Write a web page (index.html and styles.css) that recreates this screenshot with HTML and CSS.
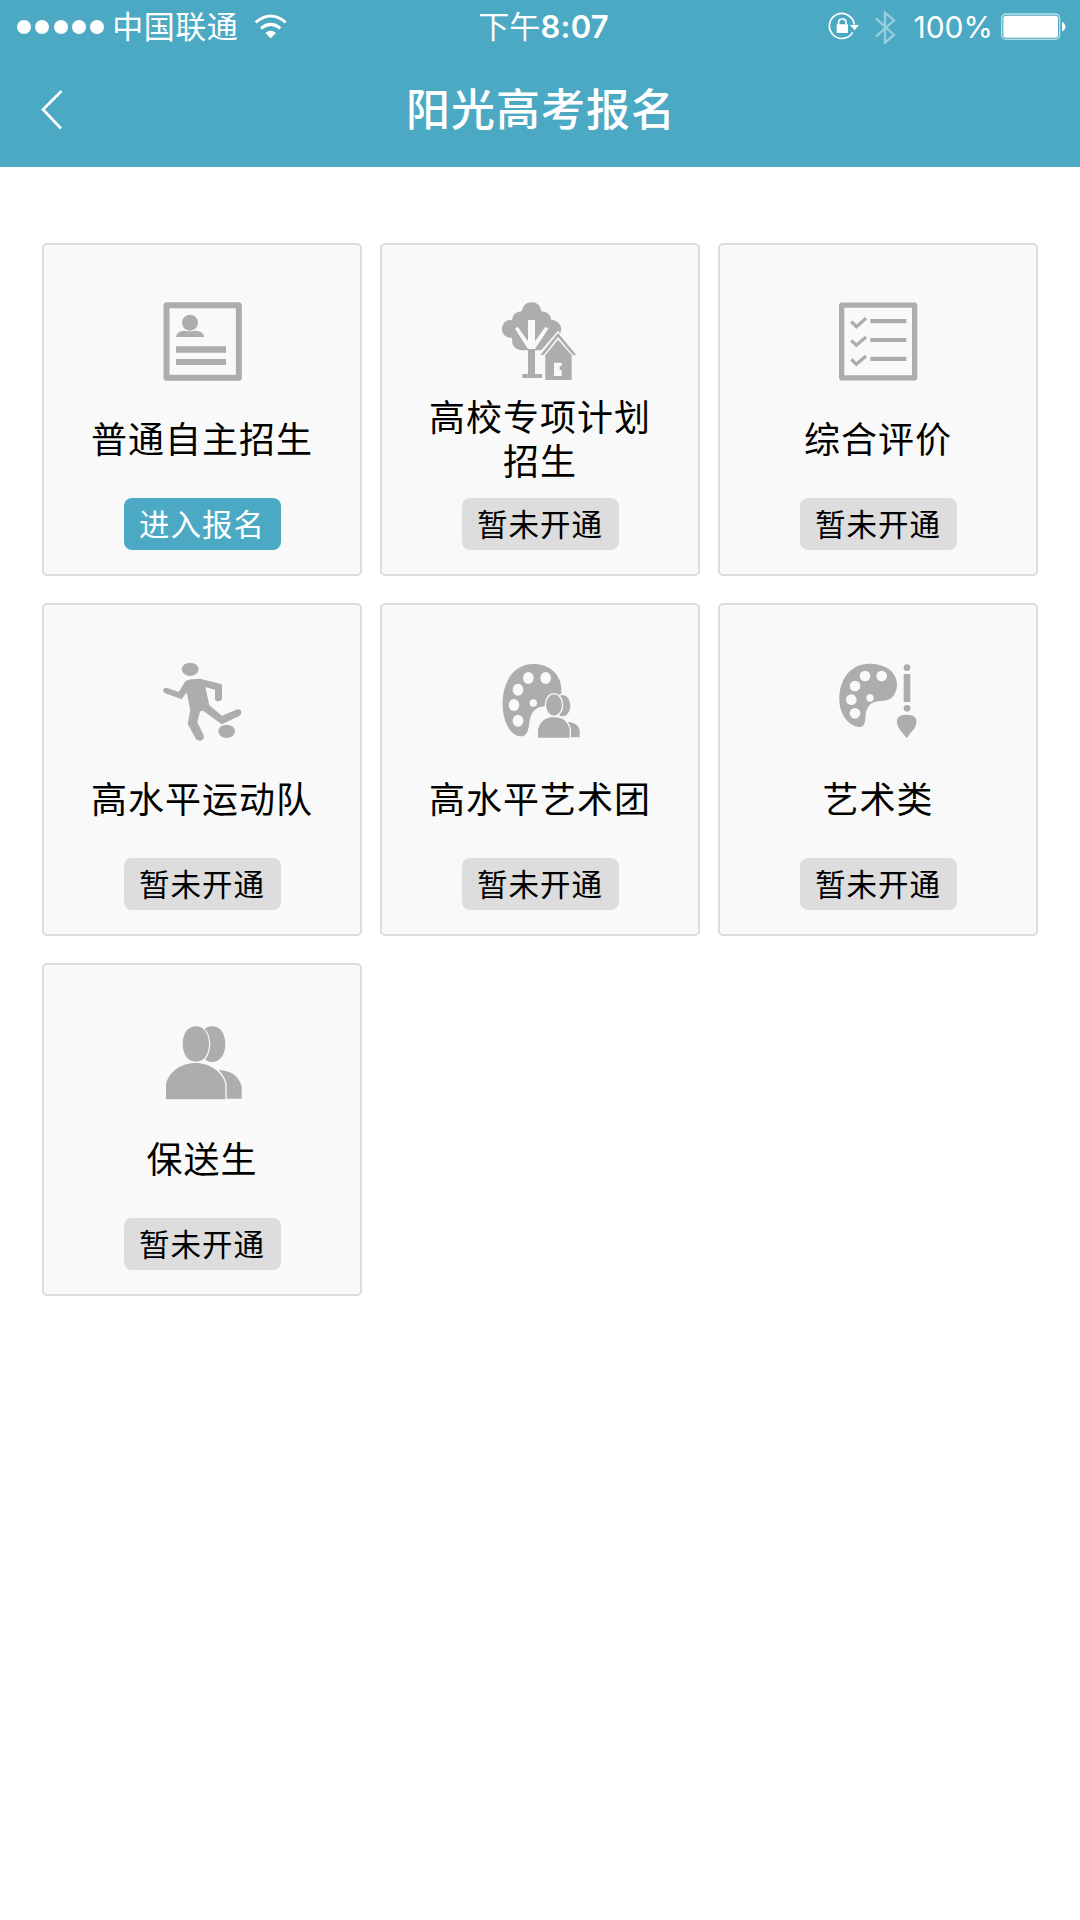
FILE: index.html
```html
<!DOCTYPE html>
<html lang="zh-CN">
<head>
<meta charset="UTF-8">
<title>阳光高考报名</title>
<link rel="stylesheet" href="styles.css">
</head>
<body>
	<div class="header">
		<div class="status">
			<div class="status-left">
				<div class="signal"><i></i><i></i><i></i><i></i><i></i></div>
				<span class="carrier">中国联通</span>
				<svg class="wifi" viewBox="765 36 99 78">
					<path d="M770 64Q815 26 860 64M786 82Q815 58 844 82" fill="none" stroke="#fff" stroke-width="9"/>
					<path d="M799 96Q815 82 831 96L815 112Z" fill="#fff"/>
				</svg>
			</div>
			<div class="status-time">下午<b>8:07</b></div>
			<div class="status-right">
				<svg class="lock" viewBox="150 36 93 84">
					<path d="M224 97A37.500 37.500 0 1 1 229 74" fill="none" stroke="#fff" stroke-width="5"/>
					<path d="M216 75H243L230 91Z" fill="#fff"/>
					<rect x="176" y="73" width="34" height="26" rx="2" fill="#fff"/>
					<path d="M182 75V67Q182 57 193 57Q204 57 204 67V75" fill="none" stroke="#fff" stroke-width="5"/>
				</svg>
				<svg class="bluetooth" viewBox="286 24 66 111">
					<path d="M292 52L346 102L319 125V35L346 58L292 107" fill="none" stroke="#97cedd" stroke-width="7"/>
				</svg>
				<span class="percent">100%</span>
				<svg class="battery" viewBox="663 39 195 81">
					<rect x="665" y="42" width="174" height="76" rx="13" fill="none" stroke="#b9dfe8" stroke-width="4"/>
					<rect x="670" y="47" width="164" height="66" rx="8" fill="#fff"/>
					<path d="M846 66Q856 70 856 80Q856 90 846 94Z" fill="#fff"/>
				</svg>
			</div>
		</div>
		<div class="nav">
			<svg class="back" viewBox="0 0 24 42"><path d="M21.500 2L3 20.500L21 39.500" fill="none" stroke="#fff" stroke-width="2.700"/></svg>
			<h1>阳光高考报名</h1>
		</div>
	</div>

	<div class="list">
		<div class="card">
			<svg class="icon" viewBox="396 216 240 240">
				<rect x="409.500" y="225.500" width="217" height="218" rx="1" fill="none" stroke="#adadad" stroke-width="18" stroke-linejoin="round"/>
				<circle cx="480" cy="278" r="24"/>
				<path d="M438 321Q440 303 464 302Q480 306 496 302Q520 303 523 321Z"/>
				<path d="M438 349H588V368H438ZM438 387H588V405H438Z"/>
			</svg>
			<div class="name">普通自主招生</div>
			<a class="btn btn-on">进入报名</a>
		</div>
		<div class="card">
			<svg class="icon" viewBox="390 216 240 240">
				<path d="M455 244Q460 217 485 217Q510 217 514 244Q541 246 544 269Q571 272 574 298Q571 322 546 324Q546 358 515 361H452Q424 356 426 324Q397 322 395 297Q398 270 426 269Q429 245 455 244Z"/>
				<path class="cut" d="M474 270H495V334L526 290L535 296L495 357H474L435 296L443 290L474 334Z"/>
				<path d="M474 360H495V432H516V444H457V432H474Z"/>
				<path class="cut" d="M564 302L502 374L518 380V450H525V376L564 330L604 376L622 376Z"/>
				<path d="M564 309L619 375H609L564 321L521 375H511Z"/>
				<path d="M564 329L605 376V450H526V376Z"/>
				<path class="cut" d="M552 398H575V408H569V420H575V438H552Z"/>
			</svg>
			<div class="name">高校专项计划招生</div>
			<a class="btn">暂未开通</a>
		</div>
		<div class="card">
			<svg class="icon" viewBox="414 216 240 240">
				<rect x="425" y="225.500" width="219" height="218" rx="1" fill="none" stroke="#adadad" stroke-width="16" stroke-linejoin="round"/>
				<path d="M511 267H619V280H511ZM511 324H619V336H511ZM511 380H619V393H511Z"/>
				<path d="M454 275L469 290L498 265M454 331L469 346L498 321M454 388L469 403L498 378" fill="none" stroke="#adadad" stroke-width="10"/>
			</svg>
			<div class="name">综合评价</div>
			<a class="btn">暂未开通</a>
		</div>
		<div class="card">
			<svg class="icon" viewBox="36 36 240 240">
				<ellipse cx="120.500" cy="58" rx="25" ry="20"/>
				<path d="M106 94Q112 87 150 86L216 103V147Q214 154 205 154Q196 154 195 147V119L166 111L178 166L216 197L262 178Q272 177 274 185Q275 193 268 198L215 223L160 183Q151 181 149 188L142 217L161 256Q164 266 156 271Q146 275 138 268L113 221L121 180L110 127L95 148L44 129Q37 124 41 117Q45 112 52 114L86 126Z"/>
				<ellipse cx="230" cy="244" rx="25" ry="20"/>
			</svg>
			<div class="name">高水平运动队</div>
			<a class="btn">暂未开通</a>
		</div>
		<div class="card">
			<svg class="icon" viewBox="30 36 240 240">
				<path d="M130 42C178 42 214 73 214 119V140L170 169C130 168 122 195 118 218C115 250 105 260 91 259C57 254 37 209 38 158C39 92 73 42 130 42Z"/>
				<g class="cut">
					<ellipse cx="115" cy="84" rx="16" ry="18"/><ellipse cx="167" cy="84" rx="16" ry="18"/>
					<ellipse cx="84" cy="119" rx="16" ry="18"/><ellipse cx="72" cy="165" rx="16" ry="18"/>
					<ellipse cx="84" cy="212" rx="16" ry="18"/><circle cx="130" cy="159" r="11"/>
				</g>
				<g class="outline">
					<ellipse cx="218" cy="167" rx="25" ry="34"/>
					<path d="M205 264V215Q265 207 271 242V264Z"/>
					<ellipse cx="192" cy="165" rx="26" ry="34"/>
					<path d="M142 265V239Q151 200 192 199Q233 200 241 239V265Z"/>
				</g>
			</svg>
			<div class="name">高水平艺术团</div>
			<a class="btn">暂未开通</a>
		</div>
		<div class="card">
			<svg class="icon" viewBox="24 36 240 240">
				<path d="M117 41C165 41 203 64 201 108C197 142 177 153 153 153C119 153 108 173 106 202C106 222 100 231 88 232C53 226 28 192 28 147C28 84 65 41 117 41Z"/>
				<g class="cut">
					<circle cx="105" cy="78" r="16"/><circle cx="155" cy="78" r="16"/>
					<circle cx="75" cy="108" r="16"/><circle cx="64" cy="149" r="16"/>
					<circle cx="75" cy="190" r="16"/><circle cx="120" cy="144" r="11"/>
				</g>
				<circle cx="231" cy="53" r="10"/>
				<path d="M221 72H241V156H221Z"/>
				<circle cx="231" cy="175" r="10"/>
				<path d="M230 265Q220 251 208 237Q196 217 203 204Q210 194 230 194Q250 194 257 204Q264 217 252 237Q240 251 230 265Z"/>
			</svg>
			<div class="name">艺术类</div>
			<a class="btn">暂未开通</a>
		</div>
		<div class="card">
			<svg class="icon" viewBox="396 216 240 240">
				<path d="M547 229C570 229 586 250 586 282C586 314 570 336 547 336Q536 336 525 329Q540 312 541 282Q540 252 524 236Q534 229 547 229Z"/>
				<path d="M566 360Q620 362 635 408V446H590V401Q584 379 566 360Z"/>
				<path d="M498 229C521 229 537 250 537 282C537 314 521 335 498 335C474 335 458 314 458 282C458 250 474 229 498 229Z"/>
				<path d="M408 448V402C416 366 453 339 496 339C540 339 577 366 586 402V448Z"/>
			</svg>
			<div class="name">保送生</div>
			<a class="btn">暂未开通</a>
		</div>
	</div>
</body>
</html>
```

FILE: styles.css
```css
* {
	box-sizing: border-box;
}

body {
	margin: 0;
	background: #fff;
	color: #000;
	font-family: Inter, "Noto Sans CJK SC", sans-serif;
}

svg {
	display: block;
	flex: none;
}

/*顶部*/
.header {
	height: 167px;
	background: #4ca9c3;
	color: #fff;
}

.status {
	display: grid;
	grid-template-columns: 1fr auto 1fr;
	height: 54px;
	padding: 0 14px 0 17px;
	font-size: 30px;
	line-height: 54px;
}

.status-left, .status-right {
	display: flex;
	align-items: center;
}

.status-right {
	justify-content: flex-end;
}

.signal {
	display: flex;
	gap: 4.300px;
	margin-right: 8px;
}

.signal i {
	width: 14px;
	height: 14px;
	border-radius: 50%;
	background: #fff;
}

.carrier {
	font-size: 31px;
	letter-spacing: .5px;
}

.wifi {
	width: 33px;
	height: 26px;
	margin: 0 0 3px 16px;
}

.status-time {
	padding-left: 4px;
	font-size: 31px;
	letter-spacing: .2px;
}

.status-time b {
	font-weight: 600;
}

.lock {
	width: 31px;
	height: 28px;
	margin: 0 15px 2px 0;
}

.bluetooth {
	width: 22px;
	height: 37px;
	margin-right: 17px;
}

.percent {
	margin-right: 8px;
}

.battery {
	width: 65px;
	height: 27px;
	margin-bottom: 1px;
}

.nav {
	display: grid;
	grid-template-columns: 60px 1fr 60px;
	align-items: center;
	height: 112px;
	padding: 0 38px 0 40px;
}

.back {
	width: 24px;
	height: 42px;
}

.nav h1 {
	margin: 0;
	font-size: 44px;
	font-weight: 500;
	line-height: 60px;
	letter-spacing: 1px;
	text-align: center;
}

/*报名类型*/
.list {
	display: grid;
	grid-template-columns: repeat(3, 320px);
	gap: 27px 18px;
	padding: 76px 42px;
}

.card {
	display: flex;
	flex-direction: column;
	align-items: center;
	height: 333px;
	padding-top: 57px;
	border: 2px solid #dcdcdc;
	border-radius: 5px;
	background: #f9f9f9;
}

.icon {
	width: 80px;
	height: 80px;
	fill: #adadad;
}

.icon .cut {
	fill: #f9f9f9;
}

.icon .outline {
	stroke: #f9f9f9;
	stroke-width: 4;
}

.name {
	display: flex;
	align-items: center;
	justify-content: center;
	width: 226px;
	height: 88px;
	margin: 14px 0;
	font-size: 36px;
	line-height: 44px;
	letter-spacing: 1px;
	text-align: center;
}

.btn {
	width: 157px;
	height: 52px;
	border-radius: 8px;
	background: #ddd;
	font-size: 30.500px;
	line-height: 53px;
	letter-spacing: 1px;
	text-align: center;
}

.btn-on {
	background: #4ca9c3;
	color: #fff;
}
```
